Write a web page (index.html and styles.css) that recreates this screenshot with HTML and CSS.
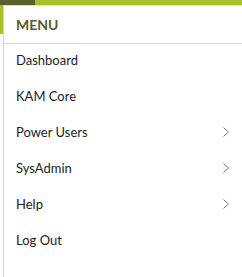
FILE: index.html
```html
<!DOCTYPE html>
<html lang="en">
<head>
    <meta charset="UTF-8">
    <meta name="viewport" content="width=device-width, initial-scale=1.0">
    <title>Menu</title>
    <link rel="stylesheet" href="styles.css">
</head>
<body>
    <div class="topbar">
        <div class="brand"></div>
    </div>

    <div class="layout">
        <nav class="menu">
            <h2 class="menu-title">MENU</h2>
            <ul class="menu-list">
                <li><a href="#">Dashboard</a></li>
                <li><a href="#">KAM Core</a></li>
                <li>
                    <a href="#">Power Users
                        <svg class="chevron" width="6" height="10" viewBox="0 0 6 10"><path d="M0.5 0.5 L5.5 5 L0.5 9.5" /></svg>
                    </a>
                </li>
                <li>
                    <a href="#">SysAdmin
                        <svg class="chevron" width="6" height="10" viewBox="0 0 6 10"><path d="M0.5 0.5 L5.5 5 L0.5 9.5" /></svg>
                    </a>
                </li>
                <li>
                    <a href="#">Help
                        <svg class="chevron" width="6" height="10" viewBox="0 0 6 10"><path d="M0.5 0.5 L5.5 5 L0.5 9.5" /></svg>
                    </a>
                </li>
                <li><a href="#">Log Out</a></li>
            </ul>
        </nav>
    </div>
</body>
</html>
```

FILE: styles.css
```css
/* General Styles */
body {
    font-family: Lato, "Open Sans", sans-serif;
    background-color: #fff;
    margin: 0;
    height: 100vh;
    display: flex;
    flex-direction: column;
}

.topbar {
    height: 5px;
    background-color: #abbf2f;
    display: flex;
}

.brand {
    width: 35px;
    background-color: #5b6129;
}

.layout {
    flex: 1;
    padding-left: 3px;
    background: linear-gradient(#abbf2f 29px, #fff 29px);
    display: flex;
}

.menu {
    flex: 1;
    background-color: #fff;
    border-left: 1px solid #d4d4d4;
    border-top: 1px solid #dcdcdc;
}

.menu-title {
    margin: 0;
    height: 37px;
    padding-left: 12px;
    display: flex;
    align-items: center;
    font-size: 14px;
    font-weight: bold;
    color: #5a5b2c;
    border-bottom: 1px solid #d6d6d6;
}

.menu-list {
    list-style: none;
    margin: 0;
    padding: 0;
}

.menu-list a {
    height: 32px;
    padding: 0 12px 4px;
    display: flex;
    align-items: center;
    justify-content: space-between;
    font-size: 13px;
    color: #222;
    text-decoration: none;
}

.chevron {
    fill: none;
    stroke: #777;
    stroke-width: 1;
    margin-right: 1px;
}
```
